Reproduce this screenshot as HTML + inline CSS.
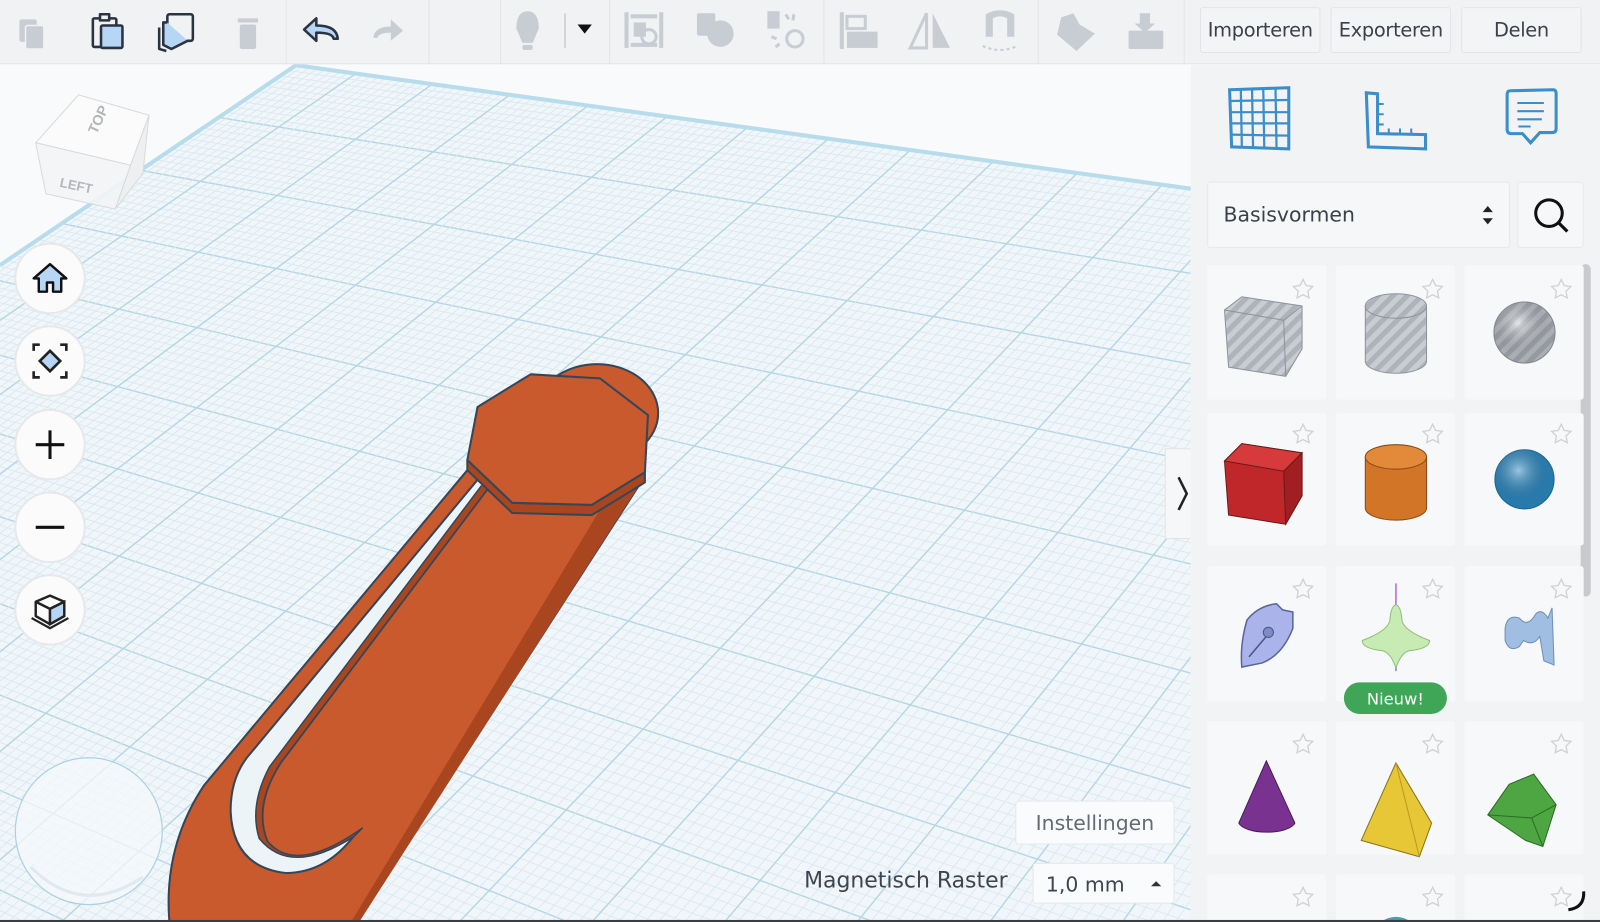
<!DOCTYPE html>
<html><head><meta charset="utf-8"><style>
*{margin:0;padding:0;box-sizing:border-box}
html,body{width:1600px;height:922px;overflow:hidden}
body{background:#f9fafb;font-family:"Liberation Sans","DejaVu Sans",sans-serif}
#w{position:absolute;left:0;top:0;width:1568px;height:904px;transform:scale(1.020408,1.019912);transform-origin:0 0;overflow:hidden}
.tb{position:absolute;left:0;top:0;width:1568px;height:63px;background:#f1f2f4;border-bottom:1px solid #e2e4e7}
.sep{position:absolute;top:0;width:1px;height:63px;background:#e2e4e7}
.btn{position:absolute;top:7px;height:45px;background:#f3f4f6;border:1px solid #e2e4e7;border-radius:3px;font-family:"DejaVu Sans",sans-serif;font-size:19px;color:#3c4048;display:flex;align-items:center;justify-content:center;letter-spacing:-0.3px}
.panel{position:absolute;left:1167px;top:64px;width:401px;height:840px;background:#f2f3f5}
.nav{position:absolute;left:14px;width:70px;height:70px;border-radius:50%;background:#fbfbfc;border:2px solid #e6e8eb;display:flex;align-items:center;justify-content:center}
.wb{position:absolute;background:#fafbfc;border:1px solid #e6e8eb;border-radius:3px;font-family:"DejaVu Sans",sans-serif;color:#555b64}
</style></head><body><div id="w">

<svg id="cv" width="1167" height="904" style="position:absolute;left:0;top:0">
<defs><clipPath id="pc"><polygon points="0,260 290,64 1167,185 1167,904 0,904"/></clipPath></defs>
<rect width="1167" height="904" fill="#f9fafb"/>
<polygon points="0,260 290,64 1167,185 1167,904 0,904" fill="#f0f6f9"/>
<g id="grid" clip-path="url(#pc)"></g>
<polyline points="0,260 290,64 1167,185" fill="none" stroke="#b7dcec" stroke-width="4"/>
<circle cx="87" cy="815" r="72" fill="#f6fafc" fill-opacity="0.7" stroke="#a9d2e3" stroke-width="1.2"/>
<path d="M30,850 Q80,900 140,860" fill="none" stroke="#dfe9ee" stroke-width="3"/>
<polygon points="77,93 146,113 128,162 35,140" fill="#fbfbfb" stroke="#d8dadc"/>
<polygon points="35,140 128,162 113,205 45,190" fill="#f3f4f5" fill-opacity="0.9" stroke="#d8dadc"/>
<polygon points="128,162 146,113 140,170 113,205" fill="#eeeff0" stroke="#d8dadc"/>
<text x="90" y="135" font-size="14" fill="#b3b6ba" font-weight="bold" transform="rotate(-65 90 130)" font-family="Liberation Sans">TOP</text>
<text x="58" y="183" font-size="13" fill="#b3b6ba" font-weight="bold" transform="rotate(12 58 183)" font-family="Liberation Sans">LEFT</text>
<g stroke="#34465a" stroke-width="2" stroke-linejoin="round">
<ellipse cx="585" cy="405" rx="60" ry="48" fill="#c95a2d"/>
<path d="M463,455 L200,770 Q160,830 166,904 L350,904 L630,470 L600,480 Z" fill="#c95a2d"/>
<path d="M600,480 L630,470 L352,904 L344,904 Z" fill="#a9461f" stroke="none"/>
<path d="M470,468 L482,474 L275,748 Q248,790 262,825 Q290,858 348,818 Q320,856 280,856 Q228,850 226,795 Q226,760 246,738 Z" fill="#edf4f8"/>
<path d="M482,474 L275,748 Q248,790 262,825 Q290,858 355,812 L347,820 Q285,860 254,822 Q244,790 264,752 L472,476" fill="#a9461f" stroke-width="1.5"/>
<polygon points="458,451 502,493 580,495 632,463 632,473 580,505 502,503 458,461" fill="#a9461f"/>
<polygon points="468,399 520,367 588,371 635,407 632,463 580,495 502,493 458,451" fill="#c95a2d"/>
</g>
<rect x="1142" y="440" width="33" height="88" fill="#f6f7f8" stroke="#e2e4e7"/>
<path d="M1155,468 L1163,484 L1155,500" fill="none" stroke="#222" stroke-width="2.5"/>
</svg>

<div class="tb">
<div class="sep" style="left:280px"></div><div class="sep" style="left:420px"></div><div class="sep" style="left:490px"></div><div class="sep" style="left:597px"></div><div class="sep" style="left:807px"></div><div class="sep" style="left:1017px"></div><div class="sep" style="left:1160px"></div>
<svg width="1160" height="63" style="position:absolute;left:0;top:0">
<g fill="#c8cdd4">
<rect x="19" y="19" width="17" height="22" rx="2"/><rect x="25" y="25" width="18" height="23" rx="2" stroke="#f1f2f4" stroke-width="1.5"/>
<rect x="233" y="18" width="20" height="4" rx="1"/><rect x="235" y="24" width="16" height="24" rx="2"/>
<path d="M395,30 L383,19 L383,26 Q367,26 366,37 L370,37 Q371,32 383,32 L383,40 Z"/>
<path d="M506,28 Q506,11 517,11 Q528,11 528,28 L522,42 L512,42 Z"/><rect x="512" y="44" width="10" height="5" rx="2"/>
<rect x="553" y="13" width="1.5" height="34"/>
<rect x="618" y="14" width="26" height="4"/><rect x="618" y="42" width="26" height="4"/><rect x="612" y="12" width="4" height="35"/><rect x="646" y="12" width="4" height="35"/><rect x="621" y="22" width="12" height="14"/><circle cx="636" cy="36" r="7" fill="none" stroke="#c8cdd4" stroke-width="3"/>
<rect x="683" y="13" width="18" height="22" rx="2"/><circle cx="706" cy="33" r="13"/>
<rect x="752" y="11" width="12" height="17"/><circle cx="779" cy="38" r="8" fill="none" stroke="#c8cdd4" stroke-width="3"/><path d="M770,14 l3,5 M778,14 l-1,6 M756,36 l5,2 M760,46 l4,-3" stroke="#c8cdd4" stroke-width="3"/>
<rect x="823" y="12" width="4" height="36"/><rect x="830" y="16" width="18" height="12" fill="none" stroke="#c8cdd4" stroke-width="3"/><rect x="830" y="31" width="30" height="16"/>
<path d="M908,13 L908,47 L892,47 Z" fill="none" stroke="#c8cdd4" stroke-width="3"/><path d="M914,13 L931,47 L914,47 Z"/>
<path d="M966,14 Q980,6 994,14 L994,36 L987,36 L987,18 Q980,14 973,18 L973,36 L966,36 Z"/><path d="M963,45 q17,8 34,0" fill="none" stroke="#c8cdd4" stroke-width="2" stroke-dasharray="3 3"/>
<path d="M1040,17 L1052,13 L1058,24 L1073,33 L1055,50 L1036,34 Z"/>
<path d="M1117,13 L1117,23 L1112,23 L1122,32 L1132,23 L1127,23 L1127,13 Z"/><rect x="1106" y="30" width="34" height="18" rx="1"/>
</g>
<g stroke="#2b3340" stroke-width="2.5" fill="none" stroke-linejoin="round">
<rect x="91" y="18" width="23" height="28" rx="1.5"/><rect x="98" y="14" width="9" height="6" fill="#f1f2f4"/>
<rect x="99" y="25" width="21" height="22" rx="1.5" fill="#b7d6f5"/>
<rect x="164" y="14" width="25" height="26" rx="2" fill="#f1f2f4"/>
<path d="M164,22 L160,22 L160,44 L168,48 L184,40" fill="#b7d6f5"/><path d="M156,27 L156,48 L163,50"/>
<path d="M298,29 L310,18 L310,25 Q330,25 331,38 L327,38 Q326,32 310,32 L310,40 Z" fill="#b7d6f5"/>
</g>
<path d="M566,24 L580,24 L573,33 Z" fill="#111"/>
</svg>
<div class="btn" style="left:1176px;width:118px">Importeren</div>
<div class="btn" style="left:1304px;width:118px">Exporteren</div>
<div class="btn" style="left:1432px;width:118px">Delen</div>
</div>

<div class="nav" style="top:238px"><svg width="40" height="40" viewBox="0 0 40 40"><path d="M20,6 L36,20 L31,20 L31,33 L23,33 L23,24 L17,24 L17,33 L9,33 L9,20 L4,20 Z" fill="#b7d6f5" stroke="#111" stroke-width="2.4" stroke-linejoin="round"/></svg></div>
<div class="nav" style="top:319px"><svg width="44" height="44" viewBox="0 0 44 44"><path d="M6,12 L6,6 L12,6 M32,6 L38,6 L38,12 M38,32 L38,38 L32,38 M12,38 L6,38 L6,32" fill="none" stroke="#222" stroke-width="2.6"/><path d="M22,12 L32,22 L22,32 L12,22 Z" fill="#b7d6f5" stroke="#222" stroke-width="2.6"/></svg></div>
<div class="nav" style="top:401px"><svg width="40" height="40"><path d="M20,6 V34 M6,20 H34" stroke="#111" stroke-width="3"/></svg></div>
<div class="nav" style="top:482px"><svg width="40" height="40"><path d="M6,20 H34" stroke="#111" stroke-width="3"/></svg></div>
<div class="nav" style="top:563px"><svg width="44" height="44" viewBox="0 0 44 44"><path d="M22,8 L36,14 L36,28 L22,36 L8,28 L8,14 Z M8,14 L22,21 L36,14 M22,21 L22,36" fill="none" stroke="#222" stroke-width="2.4" stroke-linejoin="round"/><path d="M22,21 L36,14 L36,28 L22,36 Z" fill="#b7d6f5" stroke="#222" stroke-width="2.4"/><path d="M4,30 L22,40 L40,30" fill="none" stroke="#222" stroke-width="2.2"/></svg></div>

<div class="wb" style="left:995px;top:785px;width:156px;height:43px;font-size:20px;display:flex;align-items:center;justify-content:center;color:#666b73">Instellingen</div>
<div style="position:absolute;left:788px;top:851px;font-family:'DejaVu Sans',sans-serif;font-size:21.5px;color:#3f4550">Magnetisch Raster</div>
<div class="wb" style="left:1012px;top:846px;width:139px;height:40px;font-size:20px;padding:8px 0 0 12px;color:#3f4550">1,0 mm<span style="position:absolute;right:12px;top:17px;border-left:5px solid transparent;border-right:5px solid transparent;border-bottom:5px solid #333"></span></div>

<div class="panel">
<svg width="401" height="90" style="position:absolute;left:0;top:0">
<g fill="none" stroke="#3b8ec9" stroke-width="3">
<path d="M38,24 L96,22 L96,82 L40,80 Z"/><path d="M49,24 L50,80 M60,23 L61,81 M71,23 L72,81 M83,22 L84,81 M39,35 L96,34 M39,46 L96,46 M39,57 L96,57 M40,68 L96,69" stroke-width="2.2"/>
<path d="M172,27 L183,28 L183,67 L230,68 L230,82 L174,80 Z"/><path d="M183,38 l6,0 M183,48 l6,0 M183,58 l6,0 M194,68 l0,-6 M205,68 l0,-6 M216,68 l0,-6" stroke-width="2"/>
<path d="M313,25 L355,24 Q358,24 358,28 L358,62 Q358,66 354,66 L342,66 L333,76 L325,67 L314,67 Q310,67 310,63 L310,29 Q310,25 313,25 Z"/><path d="M320,37 h26 M320,45 h26 M320,53 h24 M321,60 h12" stroke-width="2"/>
</g></svg>
<div style="position:absolute;left:16px;top:114px;width:297px;height:65px;background:#f6f7f8;border:1px solid #e6e8eb;border-radius:3px;font-family:'DejaVu Sans',sans-serif;font-size:20px;color:#3b3f47;padding:19px 0 0 15px">Basisvormen
<svg width="14" height="26" style="position:absolute;right:14px;top:19px"><path d="M2,10 L7,4 L12,10 Z M2,16 L7,22 L12,16 Z" fill="#222"/></svg></div>
<div style="position:absolute;left:320px;top:114px;width:65px;height:65px;background:#f6f7f8;border:1px solid #e6e8eb;border-radius:3px"><svg width="65" height="65"><circle cx="30" cy="30" r="13" fill="none" stroke="#111" stroke-width="3"/><path d="M40,40 L48,48" stroke="#111" stroke-width="3.2"/></svg></div>
<div style="position:absolute;left:382px;top:195px;width:10px;height:326px;background:#c8cacd;border-radius:5px"></div>
</div>

<svg width="401" height="660" style="position:absolute;left:1167px;top:244px">
<defs>
<pattern id="st" width="10" height="10" patternUnits="userSpaceOnUse" patternTransform="rotate(45)"><rect width="10" height="10" fill="#c9ccd2"/><rect width="5" height="10" fill="#aeb3bb"/></pattern>
<radialGradient id="gs" cx="0.4" cy="0.35"><stop offset="0" stop-color="#fff" stop-opacity="0.5"/><stop offset="1" stop-color="#000" stop-opacity="0.15"/></radialGradient>
<g id="star"><path d="M0,-10 L2.9,-4 L9.5,-3.1 L4.7,1.5 L5.9,8 L0,5 L-5.9,8 L-4.7,1.5 L-9.5,-3.1 L-2.9,-4 Z" fill="none" stroke="#cfd1d4" stroke-width="1.3"/></g>
</defs>
<g fill="#f7f8f9">
<rect x="16" y="16" width="117" height="132" rx="3"/><rect x="142" y="16" width="117" height="132" rx="3"/><rect x="268" y="16" width="117" height="132" rx="3"/>
<rect x="16" y="161" width="117" height="130" rx="3"/><rect x="142" y="161" width="117" height="130" rx="3"/><rect x="268" y="161" width="117" height="130" rx="3"/>
<rect x="16" y="311" width="117" height="133" rx="3"/><rect x="142" y="311" width="117" height="133" rx="3"/><rect x="268" y="311" width="117" height="133" rx="3"/>
<rect x="16" y="463" width="117" height="131" rx="3"/><rect x="142" y="463" width="117" height="131" rx="3"/><rect x="268" y="463" width="117" height="131" rx="3"/>
<rect x="16" y="613" width="117" height="60" rx="3"/><rect x="142" y="613" width="117" height="60" rx="3"/><rect x="268" y="613" width="117" height="60" rx="3"/>
</g>
<g>
<use href="#star" x="110" y="40"/><use href="#star" x="237" y="40"/><use href="#star" x="363" y="40"/>
<use href="#star" x="110" y="182"/><use href="#star" x="237" y="182"/><use href="#star" x="363" y="182"/>
<use href="#star" x="110" y="334"/><use href="#star" x="237" y="334"/><use href="#star" x="363" y="334"/>
<use href="#star" x="110" y="486"/><use href="#star" x="237" y="486"/><use href="#star" x="363" y="486"/>
<use href="#star" x="110" y="636"/><use href="#star" x="237" y="636"/><use href="#star" x="363" y="636"/>
</g>
<g stroke="#8e939b" stroke-width="1">
<polygon points="33,60 50,47 109,56 109,98 93,125 37,116" fill="url(#st)"/>
<path d="M33,60 L91,70 L109,56 M91,70 L93,125" fill="none"/>
<path d="M171,56 L171,110 A30,12 0 0 0 231,110 L231,56 Z" fill="url(#st)"/><ellipse cx="201" cy="56" rx="30" ry="12" fill="url(#st)"/>
<circle cx="327" cy="82" r="30" fill="url(#st)"/><circle cx="327" cy="82" r="30" fill="url(#gs)" stroke="none"/>
</g>
<g stroke="#6a1a1a" stroke-width="1">
<polygon points="33,208 50,191 109,200 109,242 93,270 37,261" fill="#c0272b"/>
<polygon points="33,208 91,218 109,200 50,191" fill="#d63a3a"/><polygon points="91,218 109,200 109,242 93,270" fill="#a11f22"/>
</g>
<g stroke="#8a4a17"><path d="M171,204 L171,254 A30,12 0 0 0 231,254 L231,204 Z" fill="#d27526"/><ellipse cx="201" cy="204" rx="30" ry="12" fill="#e28a3a"/></g>
<circle cx="327" cy="226" r="29" fill="#2f8fcb" stroke="#1f6d9e"/><circle cx="327" cy="226" r="29" fill="url(#gs)"/>
<path d="M55,364 Q66,350 84,348 L90,354 L100,356 L100,372 Q90,398 70,406 L50,410 Q48,388 55,364 Z" fill="#aab4ea" stroke="#5b6698" stroke-width="1.5"/>
<circle cx="76" cy="376" r="5" fill="#7f8ac6" stroke="#4b5587"/><path d="M74,380 L57,400" stroke="#4b5587" stroke-width="1.5"/>
<path d="M201,328 V350 M201,404 V414" stroke="#b46ad6" stroke-width="1.5"/>
<path d="M201,349 Q196,350 195,365 Q192,375 168,384 Q168,392 188,394 Q196,396 201,411 Q206,396 214,394 Q234,392 234,384 Q210,375 207,365 Q206,350 201,349 Z" fill="#c7ebb2" stroke="#8fbf78"/>
<path d="M308,372 Q310,358 322,362 Q330,372 338,358 Q344,352 350,362 L354,352 L356,408 L346,404 L342,380 Q336,390 326,384 L322,390 Q312,396 308,384 Z" fill="#9fbee2" stroke="#6d8fb8"/>
<rect x="150" y="425" width="101" height="31" rx="15.5" fill="#3fa658"/>
<text x="200.5" y="447" text-anchor="middle" font-family="DejaVu Sans,sans-serif" font-size="16" fill="#fff">Nieuw!</text>
<path d="M74,502 L47,563 A28,11 0 0 0 102,563 Z" fill="#7a3290" stroke="#4a1a5c"/>
<path d="M201,504 L167,580 L224,596 L236,563 Z" fill="#e8c736" stroke="#8a7314"/><path d="M201,504 L224,596" stroke="#b89a20"/>
<path d="M291,555 L312,525 L336,515 L358,545 L345,586 L328,580 Z" fill="#4ea642" stroke="#2c6b24"/><path d="M291,555 L334,558 L345,586 M334,558 L358,545" fill="none" stroke="#2c6b24"/>
<path d="M186,660 Q201,650 216,660 Z" fill="#4a9ab0"/>
<path d="M370,648 Q386,646 385,630" fill="none" stroke="#111" stroke-width="3"/>
</svg>
<div style="position:absolute;left:0;top:902px;width:1568px;height:2px;background:#3a3d42"></div>
</div>
<script>
(function(){
var g=document.getElementById('grid'),h='';
function L(ax,ay,bx,by,maj){var dx=bx-ax,dy=by-ay;var ex=ax+dx*3,ey=ay+dy*3;h+='<line x1="'+ax+'" y1="'+ay+'" x2="'+ex+'" y2="'+ey+'" stroke="'+(maj?'#b5d6e5':'#d8e8ef')+'" stroke-width="'+(maj?1.4:0.8)+'"/>';}
var A=[-2510,-322];
for(var i=0;i<400;i++){var y=185+8*i+0.03*i*i;if(y>4000)break;L(A[0],A[1],1167,y,i%10==0);}
var B=[2990,-1761];
for(var j=0;j<300;j++){var x=-980+13*j;if(x>1400)break;L(B[0],B[1],x,904,j%10==0);}
g.innerHTML=h;
})();
</script>
</body></html>
